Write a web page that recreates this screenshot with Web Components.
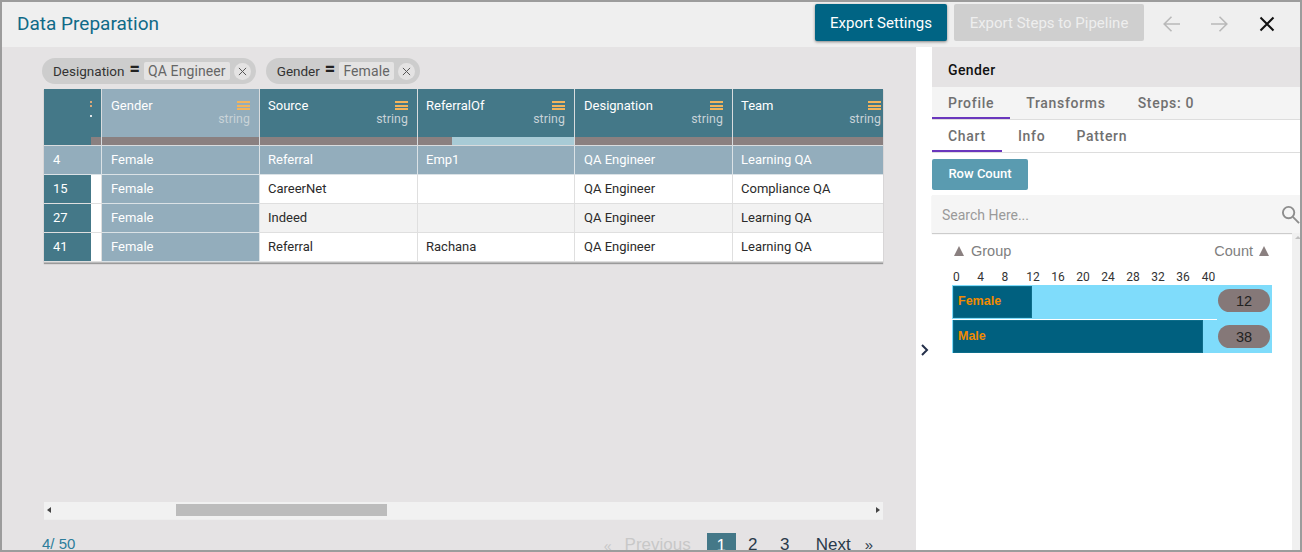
<!DOCTYPE html>
<html>
<head>
<meta charset="utf-8">
<title>Data Preparation</title>
<style>
  html, body { margin: 0; padding: 0; height: 552px; overflow: hidden; }
  body { font-family: Roboto, "Liberation Sans", sans-serif; }
</style>
</head>
<body>
<data-prep-app></data-prep-app>

<script>
function tpl(html) {
  const t = document.createElement("template");
  t.innerHTML = html;
  return t;
}

function mount(el, template) {
  el.attachShadow({ mode: "open" });
  el.shadowRoot.appendChild(template.content.cloneNode(true));
}

const headerTemplate = tpl(`
<style>
  :host { display: flex; align-items: flex-start; height: 45px; background: #efefef; flex: none; }
  h1 { margin: 0; padding: 10px 0 0 15px; font: 400 19px/24px Roboto, sans-serif; color: #0f6a88; flex: 1; }
  button { height: 37px; margin-top: 2px; border: 0; border-radius: 2px; font: 400 15px Roboto, sans-serif; color: #fff; padding: 0; }
  .primary { width: 132px; background: #006484; box-shadow: 0 1px 3px rgba(0,0,0,.45); }
  .off { width: 190px; margin-left: 7px; background: #cfcfcf; color: #eee; }
  svg { display: block; margin-top: 12px; }
  .back { margin-left: 18px; }
  .next { margin-left: 27px; }
  .close { margin-left: 28px; margin-right: 23px; }
</style>
<h1>Data Preparation</h1>
<button class="primary">Export Settings</button>
<button class="off">Export Steps to Pipeline</button>
<svg class="back" width="20" height="20" viewBox="0 0 20 20" fill="none" stroke="#b9b9b9" stroke-width="1.6"><path d="M18 10H2M9.500 2.800 2.200 10l7.300 7.200"/></svg>
<svg class="next" width="20" height="20" viewBox="0 0 20 20" fill="none" stroke="#b9b9b9" stroke-width="1.600"><path d="M2 10h16M10.500 2.800 17.800 10l-7.300 7.200"/></svg>
<svg class="close" width="20" height="20" viewBox="0 0 20 20" fill="none" stroke="#111" stroke-width="2"><path d="M3.500 3.500l13 13M16.500 3.500l-13 13"/></svg>
`);
class AppHeader extends HTMLElement {
  constructor() { super(); mount(this, headerTemplate); }
}
customElements.define("app-header", AppHeader);

const chipTemplate = tpl(`
<style>
  :host { display: inline-flex; align-items: center; height: 26px; border-radius: 13px; background: #cdcdcd; font: 400 13.500px Roboto, sans-serif; color: #333; padding: 0 5px 0 11px; }
  b { font-weight: 900; font-size: 18px; line-height: 18px; margin: -4px 4px 0 5px; color: #222; }
  .val { background: #e4e3e3; color: #666; padding: 0 4px; height: 18px; line-height: 18px; border-radius: 2px; font-size: 14px; letter-spacing: .1px; }
  .x { width: 17px; height: 17px; margin-left: 4px; border-radius: 50%; background: #e4e3e3; display: flex; align-items: center; justify-content: center; }
</style>
<span><slot name="name"></slot></span><b>=</b><span class="val"><slot name="value"></slot></span>
<span class="x"><svg width="9" height="9" viewBox="0 0 10 10" fill="none" stroke="#555" stroke-width="1.100"><path d="M1 1l8 8M9 1 1 9"/></svg></span>
`);
class FilterChip extends HTMLElement {
  constructor() { super(); mount(this, chipTemplate); }
}
customElements.define("filter-chip", FilterChip);

const headTemplate = tpl(`
<style>
  :host { display: flex; flex-direction: column; height: 57px; box-sizing: border-box; background: #447888; color: #fff; font-size: 13px; border-bottom: 1px solid #d9dcde; border-right: 1px solid #d9dcde; }
  :host([sel]) { background: #93adbc; }
  :host([last]) { border-right: 0; }
  .top { flex: 1; padding: 9px 9px 0 var(--pad, 8px); display: flex; justify-content: space-between; align-items: flex-start; }
  .r { display: flex; flex-direction: column; align-items: flex-end; }
  .menu { width: 13px; height: 9px; margin-top: 3px; border-top: 2px solid #f3b45c; border-bottom: 2px solid #f3b45c; position: relative; box-sizing: border-box; }
  .menu::after { content: ""; position: absolute; left: 0; right: 0; top: 1.500px; height: 2px; background: #f3b45c; }
  .type { color: #c9d3d8; font-size: 12.300px; margin-top: 2px; letter-spacing: .1px; }
  .bar { height: 8px; background: #8a8080; display: flex; justify-content: flex-end; }
  .fill { background: #a8cbd6; height: 100%; }
</style>
<div class="top"><span><slot></slot></span><div class="r"><span class="menu"></span><span class="type">string</span></div></div>
<div class="bar"><div class="fill"></div></div>
`);
class ColumnHead extends HTMLElement {
  constructor() { super(); mount(this, headTemplate); }
  connectedCallback() {
    const fill = this.shadowRoot.querySelector(".fill");
    fill.style.width = (this.getAttribute("fill") || "0") + "%";
  }
}
customElements.define("column-head", ColumnHead);

const gridTemplate = tpl(`
<style>
  :host { display: block; width: 839px; background: #fff; box-shadow: 0 1px 1px #9a9a9a; font: 400 13px Roboto, sans-serif; color: #2b2b2b; overflow: hidden; border-bottom: 1px solid #bbb; }
  .g { display: grid; grid-template-columns: 58px 158px 158px 157px 158px 157px; }
  .idx { height: 57px; background: #447888; border-right: 1px solid #d9dcde; border-bottom: 1px solid #d9dcde; box-sizing: border-box; position: relative; }
  .idx i { position: absolute; left: 47px; bottom: 0; right: 0; height: 8px; background: #8a8080; }
  .dots { position: absolute; right: 9px; top: 12px; width: 2px; display: flex; flex-direction: column; gap: 2px; }
  .dots span { height: 2px; background: #dca878; }
  .dots span:last-child { background: #dfe6e9; margin-top: 6px; }
  .c { height: 29px; box-sizing: border-box; padding: 0 0 0 9px; line-height: 28px; border-right: 1px solid #dfdfdf; border-bottom: 1px solid #dfdfdf; white-space: nowrap; overflow: hidden; }
  .alt { background: #f2f2f2; }
  .sel { background: #93adbc; color: #fff; border-color: #dbe2e6; }
  .p8 { padding-left: 8px; }
  .num { padding: 0; display: flex; background: #fff; }
  .num span { width: 47px; background: #447888; color: #fff; padding-left: 9px; box-sizing: border-box; }
</style>
<div class="g" id="g"></div>
`);
const gridRows = [
  ["4", "Female", "Referral", "Emp1", "QA Engineer", "Learning QA"],
  ["15", "Female", "CareerNet", "", "QA Engineer", "Compliance QA"],
  ["27", "Female", "Indeed", "", "QA Engineer", "Learning QA"],
  ["41", "Female", "Referral", "Rachana", "QA Engineer", "Learning QA"]
];
const gridCols = [["Gender", 0, 9, true], ["Source", 0, 8], ["ReferralOf", 78, 8], ["Designation", 0, 9], ["Team", 0, 8]];
class DataGrid extends HTMLElement {
  constructor() { super(); mount(this, gridTemplate); }
  connectedCallback() {
    const g = this.shadowRoot.getElementById("g");
    let html = `<div class="idx"><div class="dots"><span></span><span></span><span></span></div><i></i></div>`;
    gridCols.forEach((c, n) => {
      html += `<column-head style="--pad:${c[2]}px" fill="${c[1]}"${c[3] ? " sel" : ""}${n === 4 ? " last" : ""}>${c[0]}</column-head>`;
    });
    gridRows.forEach((r, i) => {
      r.forEach((v, j) => {
        if (j === 0 && i > 0) {
          html += `<div class="c num"><span>${v}</span></div>`;
          return;
        }
        let cls = "c";
        if (i === 0 || j === 1) cls += " sel";
        else if (i === 2) cls += " alt";
        if (j > 0 && gridCols[j - 1][2] === 8) cls += " p8";
        html += `<div class="${cls}">${v}</div>`;
      });
    });
    g.innerHTML = html;
  }
}
customElements.define("data-grid", DataGrid);

const scrollTemplate = tpl(`
<style>
  :host { display: flex; align-items: center; width: 839px; height: 17px; background: #f1f1f1; box-shadow: 0 1px 0 #eee; position: relative; }
  .l, .r { width: 0; height: 0; border: 3px solid transparent; position: absolute; top: 5px; }
  .l { left: 3px; border-left: 0; border-right: 4px solid #444; }
  .r { right: 3px; border-right: 0; border-left: 4px solid #444; }
  .thumb { position: absolute; left: 132px; width: 211px; top: 2px; height: 12px; background: #bcbcbc; }
</style>
<span class="l"></span><span class="thumb"></span><span class="r"></span>
`);
class GridScroll extends HTMLElement {
  constructor() { super(); mount(this, scrollTemplate); }
}
customElements.define("grid-scroll", GridScroll);

const pagerTemplate = tpl(`
<style>
  :host { display: flex; justify-content: space-between; width: 839px; font: 400 15px "Liberation Sans", sans-serif; height: 32px; margin-left: -2px; }
  .count { color: #2c7d9b; padding-top: 16px; }
  nav { display: flex; align-items: flex-start; color: #2a3a4a; font-size: 17px; line-height: 20px; padding-top: 16px; padding-right: 8px; }
  .dis { color: #c8c8c8; }
  .cur { width: 29px; height: 24px; margin-top: -2px; background: #447888; color: #fff; text-align: center; line-height: 26px; margin-left: 16px; }
  .p { margin-left: 12px; width: 20px; text-align: center; }
</style>
<span class="count">4/ 50</span>
<nav>
  <span class="dis" style="font-size:14px;line-height:22px">«</span>
  <span class="dis" style="margin-left:13px">Previous</span>
  <span class="cur">1</span>
  <span class="p" style="margin-left:7px">2</span>
  <span class="p">3</span>
  <span style="margin-left:21px">Next</span>
  <span style="margin-left:14px;font-size:15px">»</span>
</nav>
`);
class GridPager extends HTMLElement {
  constructor() { super(); mount(this, pagerTemplate); }
}
customElements.define("grid-pager", GridPager);

const tabsTemplate = tpl(`
<style>
  :host { display: flex; height: 33px; box-sizing: border-box; border-bottom: 1px solid #ddd; font: 500 14px Roboto, sans-serif; letter-spacing: .7px; color: #707070; }
  ::slotted(span) { padding: 8px 16px 0; height: 32px; box-sizing: border-box; }
  ::slotted(.on) { border-bottom: 2px solid #6a37bd; }
</style>
<slot></slot>
`);
class TabBar extends HTMLElement {
  constructor() { super(); mount(this, tabsTemplate); }
}
customElements.define("tab-bar", TabBar);

const chartTemplate = tpl(`
<style>
  :host { display: block; position: relative; height: 120px; font-family: "Liberation Sans", sans-serif; }
  .heads { display: flex; justify-content: space-between; width: 315px; margin-left: 22px; padding-top: 9px; font-size: 14.500px; color: #808080; line-height: 18px; }
  .heads span { display: flex; align-items: center; gap: 7px; }
  .heads span:last-child { gap: 6px; }
  .heads i { width: 0; height: 0; border: 5.500px solid transparent; border-top: 0; border-bottom: 10px solid #8a8080; }
  .ticks { display: flex; margin: 10px 0 0 21px; height: 15px; font: 12px/15px Roboto, sans-serif; color: #333; }
  .ticks span { flex: none; }
  .row { width: 320px; margin-left: 20px; height: 34px; background: #7fdcfb; position: relative; padding-left: 1px; box-sizing: border-box; }
  .row .b { box-sizing: border-box; background: #00607f; border: 1px solid #0d6d8a; color: #f08a00; font: 700 12.500px/28px "Liberation Sans", sans-serif; padding-left: 4px; margin-top: 0; position: relative; top: 1px; }
  .two::before { content: ""; position: absolute; left: 0; top: 0; width: 265px; height: 1px; background: #fff; }
  .pill { position: absolute; right: 2px; width: 52px; height: 23px; border-radius: 12px; background: #857878; color: #222; font-size: 14.500px; text-align: center; line-height: 25px; }
</style>
<div class="heads"><span><i></i>Group</span><span>Count<i></i></span></div>
<div class="ticks" id="t"></div>
<div class="row"><div class="b" style="width:79px;height:32px">Female</div><span class="pill" style="top:4px">12</span></div>
<div class="row two"><div class="b" style="width:250px;height:33px;line-height:30px">Male</div><span class="pill" style="top:6px">38</span></div>
`);
class ProfileChart extends HTMLElement {
  constructor() { super(); mount(this, chartTemplate); }
  connectedCallback() {
    const xs = [0, 4, 8, 12, 16, 20, 24, 28, 32, 36, 40];
    const gaps = [17.5, 17.5, 18, 11.500, 11.500, 11.500, 11.500, 11.500, 11.500, 12, 0];
    this.shadowRoot.getElementById("t").innerHTML = xs
      .map((x, i) => `<span style="margin-right:${gaps[i]}px">${x}</span>`).join("");
  }
}
customElements.define("profile-chart", ProfileChart);

const panelTemplate = tpl(`
<style>
  :host { display: flex; flex-direction: column; width: 368px; flex: none; background: #fff; position: relative; }
  .title { height: 40px; background: #e5e3e4; padding: 15px 0 0 16px; box-sizing: border-box; font: 500 14px Roboto, sans-serif; color: #111; letter-spacing: .4px; }
  .btn { width: 96px; height: 31px; margin: 6px 0 5px; background: #5a9bb0; border-radius: 2px; color: #fff; font: 500 13px/30px Roboto, sans-serif; text-align: center; }
  .search { height: 38px; background: #f5f5f5; display: flex; align-items: center; justify-content: space-between; box-shadow: 0 1px 1px #ccc; padding: 0 0 0 10px; font: 400 14px Roboto, sans-serif; color: #9a9a9a; box-sizing: border-box; }
  .search span { padding-top: 1px; }
  .search svg { display: block; margin-top: 1px; }
  .rail { position: absolute; right: 0; top: 186px; bottom: 0; width: 8px; background: #f0f0f0; }
  .rail::before { content: ""; position: absolute; left: 3px; top: 3px; border: 3px solid transparent; border-top: 0; border-bottom: 3px solid #c0c0c0; }
</style>
<div class="title">Gender</div>
<tab-bar style="background:#f4f4f4">
  <span class="on">Profile</span>
  <span>Transforms</span>
  <span>Steps: 0</span>
</tab-bar>
<tab-bar>
  <span class="on">Chart</span>
  <span>Info</span>
  <span style="margin-left:-1px">Pattern</span>
</tab-bar>
<div>
  <div class="btn">Row Count</div>
  <div class="search"><span>Search Here...</span>
    <svg width="19" height="19" viewBox="0 0 20 20" fill="none" stroke="#8d8d8d" stroke-width="2"><circle cx="8" cy="8" r="6"/><path d="M12.500 12.500 19 19"/></svg>
  </div>
  <profile-chart></profile-chart>
</div>
<div class="rail"></div>
`);
class SidePanel extends HTMLElement {
  constructor() { super(); mount(this, panelTemplate); }
}
customElements.define("side-panel", SidePanel);

const appTemplate = tpl(`
<style>
  :host { display: flex; flex-direction: column; width: 1302px; height: 552px; box-sizing: border-box; border: 2px solid #9c9c9c; overflow: hidden; background: #e5e3e4; }
  .body { display: flex; flex: 1; min-height: 0; }
  .left { width: 914px; flex: none; padding: 11px 0 0 42px; box-sizing: border-box; }
  .chips { display: flex; gap: 10px; height: 27px; margin-left: -2px; margin-bottom: 4px; }
  .grid-area { height: 413px; }
  .strip { width: 16px; flex: none; background: #fff; position: relative; }
  .strip svg { position: absolute; left: 4px; top: 297px; }
</style>
<app-header></app-header>
<div class="body">
  <div class="left">
    <div class="chips">
      <filter-chip><span slot="name">Designation</span><span slot="value">QA Engineer</span></filter-chip>
      <filter-chip><span slot="name">Gender</span><span slot="value">Female</span></filter-chip>
    </div>
    <div class="grid-area"><data-grid></data-grid></div>
    <grid-scroll></grid-scroll>
    <grid-pager></grid-pager>
  </div>
  <div class="strip"><svg width="10" height="12" viewBox="0 0 10 12" fill="none" stroke="#24304a" stroke-width="2"><path d="M2 1l5 5-5 5"/></svg></div>
  <side-panel></side-panel>
</div>
`);
class DataPrepApp extends HTMLElement {
  constructor() { super(); mount(this, appTemplate); }
}
customElements.define("data-prep-app", DataPrepApp);
</script>
</body>
</html>
